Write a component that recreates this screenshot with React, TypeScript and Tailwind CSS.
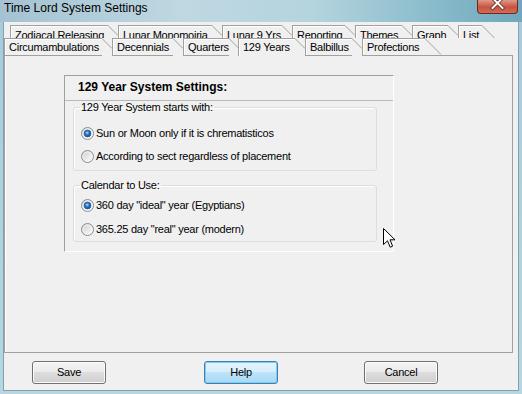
import { useId } from 'react';
import clsx from 'clsx';

type TabDef = { label: string; w: string };

const backRow: TabDef[] = [
  { label: 'Zodiacal Releasing', w: 'w-[108px]' },
  { label: 'Lunar Monomoiria', w: 'w-[104px]' },
  { label: 'Lunar 9 Yrs', w: 'w-[70px]' },
  { label: 'Reporting', w: 'w-[63px]' },
  { label: 'Themes', w: 'w-[57px]' },
  { label: 'Graph', w: 'w-[46px]' },
  { label: 'List', w: 'w-[34px]' },
];

const frontRow: TabDef[] = [
  { label: 'Circumambulations', w: 'w-[108px]' },
  { label: 'Decennials', w: 'w-[71px]' },
  { label: 'Quarters', w: 'w-[55px]' },
  { label: '129 Years', w: 'w-[67px]' },
  { label: 'Balbillus', w: 'w-[57px]' },
  { label: 'Profections', w: 'w-[73px]' },
];

function Tab({ tab, last, selected, front }: { tab: TabDef; last: boolean; selected?: boolean; front?: boolean }) {
  return (
    <div
      className={clsx(
        'relative flex shrink-0 h-full',
        tab.w,
        front && !selected && 'border-b border-[#a0a0a0]'
      )}
    >
      <div
        className={clsx(
          'flex-1 border-l border-t border-[#a0a0a0] bg-[#f0f0f0] shadow-[inset_1px_1px_0_#ffffff] pl-[4px] whitespace-nowrap',
          front ? 'pt-[2px]' : 'pt-[3px]'
        )}
      >
        {tab.label}
      </div>
      <svg width="10" height="18" viewBox="0 0 10 18" className="shrink-0 overflow-visible">
        <polygon points={last ? '0,0 17,17 0,17' : '0,0 10,10 10,18 0,18'} fill="#f0f0f0" />
        <line x1="0" y1="0.5" x2={last ? 16 : 10} y2={last ? 16.5 : 10.5} stroke="#a0a0a0" strokeWidth="1" />
      </svg>
    </div>
  );
}

function Radio({ checked }: { checked: boolean }) {
  const id = useId().replace(/:/g, '');
  return (
    <svg width="13" height="13" viewBox="0 0 13 13" className="shrink-0">
      <defs>
        <linearGradient id={`${id}bg`} x1="0" y1="0" x2="1" y2="1">
          <stop offset="0" stopColor="#c8c8c8" />
          <stop offset="0.6" stopColor="#ececec" />
          <stop offset="1" stopColor="#ffffff" />
        </linearGradient>
        <radialGradient id={`${id}dot`} cx="0.45" cy="0.4" r="0.65">
          <stop offset="0" stopColor="#a8dcff" />
          <stop offset="0.45" stopColor="#2b78c8" />
          <stop offset="1" stopColor="#123f78" />
        </radialGradient>
      </defs>
      <circle cx="6.5" cy="6.5" r="6" fill={`url(#${id}bg)`} stroke="#8a8c8e" strokeWidth="1" />
      <circle cx="6.5" cy="6.5" r="4.6" fill="none" stroke="#f6f6f6" strokeWidth="0.8" />
      {checked && <circle cx="6.5" cy="6.5" r="3.4" fill={`url(#${id}dot)`} stroke="#1c4f8c" strokeWidth="0.6" />}
    </svg>
  );
}

function RadioRow({ label, checked, h }: { label: string; checked: boolean; h: string }) {
  return (
    <div className={clsx('flex items-center', h)}>
      <Radio checked={checked} />
      <span className="ml-[2px] whitespace-nowrap">{label}</span>
    </div>
  );
}

function Button({ label, primary, className }: { label: string; primary?: boolean; className?: string }) {
  return (
    <button
      className={clsx(
        'w-[74px] h-[23px] rounded-[3px] border text-black leading-none',
        primary
          ? 'border-[#3c7fb1] bg-[linear-gradient(#e5f4fc_0%,#d5edfb_50%,#bce4fa_50%,#a8d8f4_100%)] shadow-[inset_0_0_0_1px_#7fcdf5]'
          : 'border-[#707070] bg-[linear-gradient(#f3f3f3_0%,#ebebeb_50%,#dddddd_50%,#cfcfcf_100%)] shadow-[inset_0_0_0_1px_#fbfbfb]',
        className
      )}
    >
      {label}
    </button>
  );
}

export default function App() {
  return (
    <div className="relative w-[522px] h-[394px] overflow-hidden flex flex-col bg-[linear-gradient(180deg,#a9cad8,#b7d6e0)] font-['Liberation_Sans',Arial,sans-serif] text-[11px] leading-[13px] tracking-[-0.25px] text-black">
      {/* title bar */}
      <div className="h-[22px] shrink-0 flex items-start justify-between bg-[linear-gradient(90deg,#a4c2d2_0%,#bfd8e2_35%,#b4d4de_60%,#86b9c9_85%,#6ea8bb_100%)]">
        <span className="pl-[4px] pt-[1px] text-[12px] leading-[15px] tracking-normal">Time Lord System Settings</span>
        <div className="mr-[4px] w-[41px] h-[14px] rounded-b-[4px] border border-t-0 border-[#6b2b24] bg-[linear-gradient(180deg,#e0998a_0%,#c8523f_55%,#d36d58_100%)] overflow-hidden">
          <svg width="39" height="13" viewBox="0 0 39 13">
            <path d="M14.5 -2 L24.5 8 M24.5 -2 L14.5 8" stroke="#5a1e18" strokeWidth="3.4" strokeLinecap="square" />
            <path d="M14.5 -2 L24.5 8 M24.5 -2 L14.5 8" stroke="#ffffff" strokeWidth="2" strokeLinecap="square" />
          </svg>
        </div>
      </div>

      {/* client area */}
      <div className="mx-[3px] h-[369px] shrink-0 flex flex-col bg-[#f0f0f0] border-x border-b border-[#7fa3b4]">
        {/* tab control */}
        <div className="mt-[3px] mr-[5px] flex flex-col">
          <div className="ml-[6px] h-[13px] overflow-hidden flex">
            {backRow.map((t, i) => (
              <div key={t.label} className="h-[18px] flex">
                <Tab tab={t} last={i === backRow.length - 1} />
              </div>
            ))}
          </div>
          <div className="h-[18px] flex">
            {frontRow.map((t, i) => (
              <Tab key={t.label} tab={t} front selected={t.label === '129 Years'} last={i === frontRow.length - 1} />
            ))}
            <div className="flex-1 border-b border-[#a0a0a0]" />
          </div>

          {/* tab sheet */}
          <div className="h-[297px] border-x border-b border-[#a0a0a0] shadow-[inset_1px_0_0_#ffffff]">
            <div className="ml-[59px] mt-[19px] w-[330px] h-[177px] border-t border-l border-[#a0a0a0] border-r border-r-white border-b border-b-white flex flex-col">
              <div className="h-[25px] pt-[4px] pl-[13px] border-b border-[#b9b9b9] text-[12px] leading-[14px] font-bold tracking-normal">
                129 Year System Settings:
              </div>

              <fieldset className="ml-[8px] w-[304px] border border-[#d5dfe5] rounded-[3px] px-[7px] pt-[8px] pb-[2px] shadow-[inset_1px_1px_0_#ffffff]">
                <legend className="px-[1px] -ml-[1px]">129 Year System starts with:</legend>
                <RadioRow label="Sun or Moon only if it is chrematisticos" checked h="h-[23px]" />
                <RadioRow label="According to sect regardless of placement" checked={false} h="h-[23px]" />
              </fieldset>

              <fieldset className="ml-[8px] mt-[8px] w-[304px] border border-[#d5dfe5] rounded-[3px] px-[7px] pt-[1px] shadow-[inset_1px_1px_0_#ffffff]">
                <legend className="px-[1px] -ml-[1px]">Calendar to Use:</legend>
                <RadioRow label={'360 day "ideal" year (Egyptians)'} checked h="h-[24px]" />
                <RadioRow label={'365.25 day "real" year (modern)'} checked={false} h="h-[24px]" />
              </fieldset>
            </div>
          </div>
        </div>

        {/* buttons */}
        <div className="mt-[8px] flex">
          <Button label="Save" className="ml-[28px]" />
          <Button label="Help" primary className="ml-[98px]" />
          <Button label="Cancel" className="ml-[86px]" />
        </div>
      </div>

      {/* mouse pointer */}
      <svg width="13" height="21" viewBox="0 0 13 21" className="absolute left-[383px] top-[228px]">
        <path d="M0.5 0.5 L0.5 16.5 L4.5 12.8 L7.2 19.2 L9.6 18.2 L7 11.8 L12 11.8 Z" fill="#ffffff" stroke="#000000" strokeWidth="1" strokeLinejoin="miter" />
      </svg>
    </div>
  );
}
